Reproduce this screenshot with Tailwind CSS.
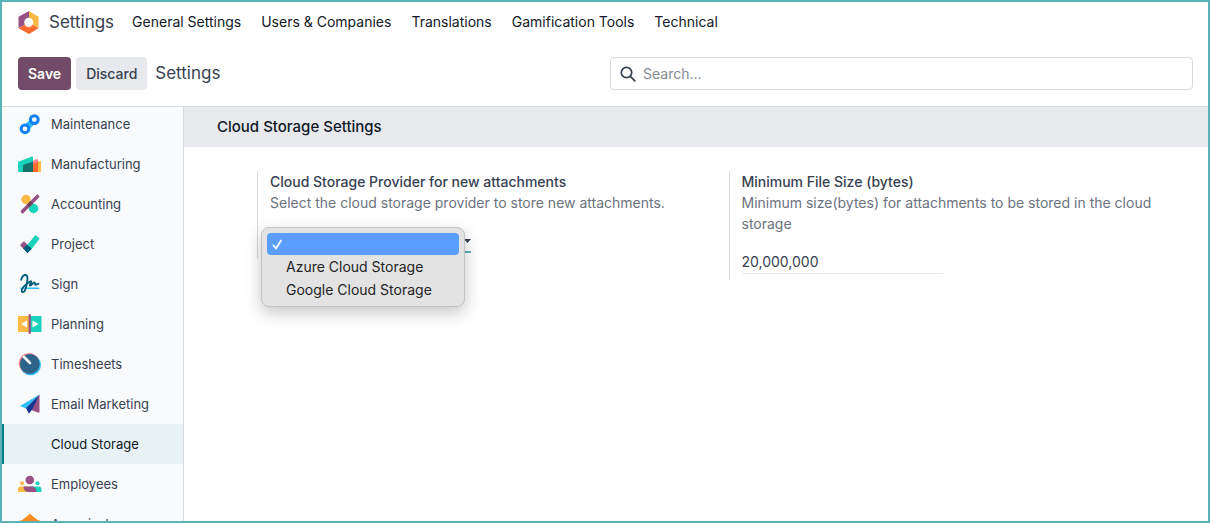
<!DOCTYPE html>
<html lang="en">
<head>
<meta charset="utf-8">
<meta name="viewport" content="width=device-width, initial-scale=1">
<title>Settings</title>
<script src="https://cdn.jsdelivr.net/npm/@tailwindcss/browser@4"></script>
</head>
<body class="font-['Inter','Liberation_Sans',sans-serif] text-sm text-[#374151]">
<div class="flex h-screen flex-col overflow-hidden border-2 border-[#5ab3b8] bg-white">
  <header class="flex h-10 shrink-0 items-center pl-4 text-[#111827]">
    <svg class="mr-[9px] h-[23px] w-[22px]" viewBox="0 0 22 22" preserveAspectRatio="none" aria-hidden="true">
      <path d="M11 0v11L.500 16.500V5.500z" fill="#985184"/>
      <path d="M11 0l9.500 5.500v11L11 11z" fill="#fbb945"/>
      <path d="M.500 16.500L11 11l9.500 5.500L11 22z" fill="#fc6b2d"/>
      <circle cx="10.700" cy="11" r="4.500" fill="#fff"/>
    </svg>
    <a href="#" class="text-[17px] text-[#374151]">Settings</a>
    <nav class="ml-[18px] flex gap-5">
      <a href="#">General Settings</a>
      <a href="#">Users &amp; Companies</a>
      <a href="#">Translations</a>
      <a href="#">Gamification Tools</a>
      <a href="#">Technical</a>
    </nav>
  </header>
  <div class="flex h-[65px] shrink-0 items-center border-b border-[#d8dadd] px-4 pb-px">
    <button class="h-[33px] rounded bg-[#714b67] px-2.5 font-semibold text-white">Save</button>
    <button class="ml-[5px] h-[33px] rounded bg-[#e7e9ed] px-2.5 font-medium">Discard</button>
    <h1 class="ml-2 text-[17px]">Settings</h1>
    <label class="mr-[-1px] ml-auto flex h-[33px] w-[583px] items-center rounded border border-[#d8dadd] pl-[9px]">
      <svg class="size-4" viewBox="0 0 16 16" fill="none" stroke="#374151" stroke-width="1.700" stroke-linecap="round" aria-hidden="true"><circle cx="6.500" cy="6.500" r="5.200"/><path d="M10.400 10.400l4.400 4.400"/></svg>
      <input type="search" aria-label="Search" placeholder="Search..." class="ml-[7px] min-w-0 flex-1 outline-none placeholder:text-[#858b96]">
    </label>
  </div>
  <div class="flex min-h-0 flex-1">
    <aside class="w-[182px] shrink-0 overflow-hidden border-r border-[#d8dadd] bg-[#f9fafb] text-[13px]">
      <nav class="-mt-[3px]">
        <a href="#" class="flex h-10 items-center gap-[9px] pl-4">
          <svg class="size-6" viewBox="0 0 24 24" fill="none" aria-hidden="true"><path d="M8 16l8-8" stroke="#2ebcfa" stroke-width="6.500"/><circle cx="7" cy="16.800" r="3.900" fill="#f9fafb" stroke="#1080f5" stroke-width="3"/><circle cx="16.300" cy="7.600" r="3.900" fill="#f9fafb" stroke="#1080f5" stroke-width="3"/></svg>
          Maintenance</a>
        <a href="#" class="flex h-10 items-center gap-[9px] pl-4">
          <svg class="size-6" viewBox="0 0 24 24" aria-hidden="true"><path d="M14 12l8-3q1-.3 1 1v9q0 1-1 1h-8z" fill="#fbb945"/><path d="M10 11l9-4q1-.3 1 1v12H10z" fill="#fc868b"/><path d="M15 12l5-2v10h-5z" fill="#fc6b2d"/><path d="M0 11q0-1 1-1.400L14 4.500q1-.3 1 1V20H1q-1 0-1-1z" fill="#1ad3bb"/><path d="M5 14q0-1 1-1.400l9-3V20H5z" fill="#17716a"/></svg>
          Manufacturing</a>
        <a href="#" class="flex h-10 items-center gap-[9px] pl-4">
          <svg class="size-6" viewBox="0 0 24 24" aria-hidden="true"><circle cx="8" cy="7.500" r="4.700" fill="#fbb945"/><circle cx="15.500" cy="16.500" r="4.700" fill="#1ad3bb"/><path d="M4.500 19.500L19.500 4.500" stroke="#985184" stroke-width="3.600" stroke-linecap="round"/><path d="M8.800 12.600l3.700-3.700 2.500 2.500-3.700 3.700z" fill="#704051"/></svg>
          Accounting</a>
        <a href="#" class="flex h-10 items-center gap-[9px] pl-4">
          <svg class="size-6" viewBox="0 0 24 24" stroke-linejoin="round" stroke-width="1" aria-hidden="true"><path d="M2.500 13.200l3.300-3.500 6.500 6-3.500 4z" fill="#985184" stroke="#985184"/><path d="M8.500 14.500l9-11 3.700 3.200-9.500 12z" fill="#1ad3bb" stroke="#1ad3bb"/><path d="M5.700 16.500l3.400-3.400 4.200 3.600-3.800 4z" fill="#005e7a" stroke="#005e7a"/></svg>
          Project</a>
        <a href="#" class="flex h-10 items-center gap-[9px] pl-4">
          <svg class="size-6" viewBox="0 0 24 24" fill="none" stroke-linecap="round" stroke-linejoin="round" aria-hidden="true"><path d="M3 16.200h17.500" stroke="#2ebcfa" stroke-width="1.500"/><path d="M3.200 7.800C4 4.500 6 2.800 7.800 3c2.500.4 1.700 5 1 9-.7 4-2 8-3.800 8.200-1.600.2-1.700-2-.5-4C6.200 13.500 9.800 11 12 9.500c1.300-.8 1.800.2.800 1.500-1.200 1.500-1.500 2.800-.3 2.500 1.500-.5 2.500-3 3.800-3.100 1.200 0 0 2.300 1.100 2.400 1 0 1.500-1 3.100-1" stroke="#005e7a" stroke-width="1.800"/></svg>
          Sign</a>
        <a href="#" class="flex h-10 items-center gap-[9px] pl-4">
          <svg class="size-6" viewBox="0 0 24 24" aria-hidden="true"><rect y="4" width="12" height="16" rx="1" fill="#fbb945"/><rect x="11.500" y="4" width="12" height="16" rx="1" fill="#1ad3bb"/><path d="M9 8.500v7L3 12zM14.500 8.500v7l6-3.500z" fill="#fff"/><rect x="10.600" y="2" width="2.200" height="20" rx="1" fill="#985184"/></svg>
          Planning</a>
        <a href="#" class="flex h-10 items-center gap-[9px] pl-4">
          <svg class="size-6" viewBox="0 0 24 24" aria-hidden="true"><circle cx="12.500" cy="12.800" r="10.500" fill="#2ebcfa"/><circle cx="11" cy="11.300" r="10.300" fill="#fc868b"/><circle cx="11.800" cy="12" r="9.900" fill="#2d6388"/><path d="M6 5l6 6" stroke="#fff" stroke-width="2.600" stroke-linecap="round"/></svg>
          Timesheets</a>
        <a href="#" class="flex h-10 items-center gap-[9px] pl-4">
          <svg class="size-6" viewBox="0 0 24 24" aria-hidden="true"><path d="M21.500 2.500L2 14l6 2.500z" fill="#2ebcfa"/><path d="M21.500 2.500V20q0 1-1 .8l-8-3z" fill="#985184"/><path d="M21.500 2.500L8 16l2.500 5q.5.700 1 0l3-4z" fill="#143892"/></svg>
          Email Marketing</a>
        <a href="#" aria-current="page" class="flex h-10 items-center border-l-2 border-[#017e84] bg-[#e6f2f3] pl-[47px] text-[#111827]">Cloud Storage</a>
        <a href="#" class="flex h-10 items-center gap-[9px] pl-4">
          <svg class="size-6" viewBox="0 0 24 24" aria-hidden="true"><circle cx="4" cy="11.300" r="2" fill="#fbb945"/><circle cx="19.500" cy="11.300" r="2" fill="#1ad3bb"/><circle cx="11.800" cy="8" r="4.300" fill="#985184"/><path d="M0 20v-2.500q0-3 3-3h9V20z" fill="#fbb945"/><path d="M12 20v-5.500h8.500q3 0 3 3V19q0 1-1 1z" fill="#1ad3bb"/><path d="M5.500 14.500h8q4.500 0 5 5.500h-7q-6 0-6-5.500z" fill="#985184"/></svg>
          Employees</a>
        <a href="#" class="flex h-10 items-center gap-[9px] pl-4">
          <svg class="size-6" viewBox="0 0 24 24" aria-hidden="true"><path d="M12 2l3.500 6 7 1-5 5 1.500 7-7-3.300L5 21l1.500-7-5-5 7-1z" fill="#fbb945" stroke="#fbb945" stroke-linejoin="round"/><path d="M12 2l9 7-9 8-9-8z" fill="#fc8a1d"/></svg>
          Appraisal</a>
      </nav>
    </aside>
    <main class="min-w-0 flex-1">
      <h2 class="flex h-10 items-center bg-[#e7e9ed] pl-[33px] text-[15px] font-medium text-[#111827]">Cloud Storage Settings</h2>
      <div class="grid grid-cols-2 items-start pt-6 pr-2 pl-[73px] leading-[21px]">
        <section class="border-l border-[#d8dadd] pr-4 pb-1.5 pl-3">
          <label for="provider" class="block font-medium">Cloud Storage Provider for new attachments</label>
          <p class="text-[#6b7280]">Select the cloud storage provider to store new attachments.</p>
          <div class="relative mt-4 w-[201px]">
            <select id="provider" class="block h-6 w-full appearance-none border-b-2 border-solid border-[#5ab3b8] outline-none">
              <option selected></option>
              <option>Azure Cloud Storage</option>
              <option>Google Cloud Storage</option>
            </select>
            <svg class="absolute top-2.5 right-0 h-1 w-[7px]" viewBox="0 0 7 4" aria-hidden="true"><path d="M0 0h7L3.500 4z" fill="#374151"/></svg>
            <ul role="listbox" aria-label="Cloud storage provider" class="absolute -top-0.5 -left-[9px] w-[204px] rounded-lg border border-[#c4c4c4] bg-[#e3e3e3] p-[5px] leading-[23px] text-[#232323] shadow-[0_6px_16px_rgba(0,0,0,0.22)]">
              <li role="option" aria-selected="true" aria-label="None" class="flex h-[22px] items-center rounded bg-[#5a9fff] pl-[5px]">
                <svg class="size-[11px]" viewBox="0 0 11 11" fill="none" stroke="#fff" stroke-width="1.800" stroke-linecap="round" stroke-linejoin="round" aria-hidden="true"><path d="M1.500 6.500L4 9.500l5-8"/></svg>
              </li>
              <li role="option" aria-selected="false" class="pl-[19px]">Azure Cloud Storage</li>
              <li role="option" aria-selected="false" class="pl-[19px]">Google Cloud Storage</li>
            </ul>
          </div>
        </section>
        <section class="border-l border-[#d8dadd] pr-4 pb-1.5 pl-3">
          <label for="minsize" class="block font-medium">Minimum File Size (bytes)</label>
          <p class="text-[#6b7280]">Minimum size(bytes) for attachments to be stored in the cloud storage</p>
          <input id="minsize" type="text" value="20,000,000" class="mt-4 block h-6 w-[201px] border-b border-[#e7e9ed] outline-none">
        </section>
      </div>
    </main>
  </div>
</div>
</body>
</html>
